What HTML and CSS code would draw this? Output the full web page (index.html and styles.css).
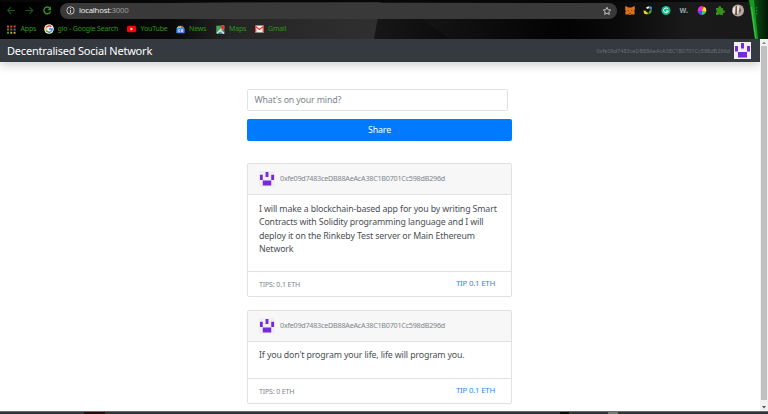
FILE: index.html
```html
<!DOCTYPE html>
<html lang="en">
<head>
<meta charset="utf-8">
<title>Decentralised Social Network</title>
<link rel="stylesheet" href="styles.css">
</head>
<body>
<svg class="defs" width="0" height="0" aria-hidden="true">
  <symbol id="identicon" viewBox="0 0 17 17">
    <rect width="17" height="17" fill="#f0f0f0"/>
    <path fill="#7529d8" d="M7 1h3v5.500H7zM1 4h3v5.500H1zM13 4h3v5.500h-3zM4 10h9v5.500H4z"/>
  </symbol>
</svg>
<header class="chrome">
  <svg class="theme" width="768" height="39" viewBox="0 0 768 39">
    <defs>
      <linearGradient id="dark"><stop offset="0" stop-color="#000"/><stop offset=".45" stop-color="#080808"/><stop offset=".6" stop-color="#242424"/><stop offset="1" stop-color="#303030"/></linearGradient>
      <linearGradient id="right"><stop offset="0" stop-color="#171717"/><stop offset=".2" stop-color="#0c0c0c"/><stop offset=".5" stop-color="#030303"/><stop offset=".62" stop-color="#0a0a0a"/><stop offset=".8" stop-color="#1a1a1a"/><stop offset="1" stop-color="#191919"/></linearGradient>
      <linearGradient id="wedge"><stop offset="0" stop-color="#181818"/><stop offset="1" stop-color="#030303"/></linearGradient>
      <linearGradient id="glow"><stop offset="0" stop-color="#102010"/><stop offset=".3" stop-color="#064b10"/><stop offset="1" stop-color="#041806"/></linearGradient>
    </defs>
    <path fill="url(#right)" d="M370 0h398v39H370z"/>
    <path fill="url(#dark)" d="M0 0h381l-7 39H0z"/>
    <path fill="url(#wedge)" d="M395 0l55 39h110V0z"/>
    <path fill="url(#glow)" d="M749 0h19v39h-11z"/>
    <path fill="#149c22" d="M749 0h5l4 39h-3z"/>
    <path fill="#49c74c" d="M751 7l1 0 4 31h-1z"/>
    <path fill="#070707" d="M0 0h748v2H0z"/>
  </svg>
  <div class="toolbar">
    <svg class="nav-icons" width="60" height="20" viewBox="0 0 60 20" fill="none" stroke="#1d5415" stroke-width="1.100">
      <path d="M15 10.500H8m3-3.300-3.300 3.300 3.300 3.300M25.500 10.500h7m-3-3.300 3.300 3.300-3.300 3.300"/>
      <path stroke="#36901d" stroke-width="1.400" d="M50 8.300a3.400 3.400 0 1 0 .5 3.200"/><path fill="#36901d" stroke="none" d="M51 6.500v3.800h-3.800z"/>
    </svg>
    <div class="omnibox">
      <svg width="9" height="9" viewBox="0 0 9 9" fill="none" stroke="#c4c4c4"><circle cx="4.500" cy="4.500" r="3.700"/><path d="M4.500 4v3M4.500 2.200v1"/></svg>
      <span class="url">localhost<i>:3000</i></span>
      <svg class="star" width="10" height="10" viewBox="0 0 10 10"><path fill="none" stroke="#c7c7c7" d="M5 1.300l1.100 2.400 2.600.3-1.900 1.800.5 2.600L5 7.100 2.700 8.400l.5-2.600L1.300 4l2.600-.3z"/></svg>
    </div>
    <svg class="extensions" width="148" height="18" viewBox="0 0 148 18">
      <path fill="#d9731d" d="M5.300 5l3.500 1.600h2.400L14.700 5l.2 3-.6 2.300.5 2-.6 1.500-2.500-.6-.8.700H9.100l-.8-.7-2.500.6-.6-1.500.5-2L5.100 8z"/><path fill="#6f3b17" d="M7.300 9l1.700.6-.3.900zM12.700 9l-1.700.6.3.9zM9 12.200h2v1H9z"/>
      <path fill="#10140c" d="M25 8l6-3 1.500 3-2 4-5 1z"/><path fill="#f4f1cf" d="M26 6.500l2.500-1.200 1 1.700-2.500 1z"/><path fill="#3e94cf" d="M29 5l3 1-.4 3-2-1z"/><path fill="#3fae39" d="M29.500 9.500l2.500-.5-1 3-3 1.500z"/><path fill="#f3d425" d="M23.500 9.500l2 .3 1.500 1.600 1.500.4-1.500 1.700-3-1z"/>
      <circle cx="46" cy="9.500" r="4.500" fill="#13b98c"/><path fill="none" stroke="#fff" stroke-width="1" d="M48 8a2.400 2.400 0 1 0 .3 2H46"/>
      <text x="59.500" y="12" class="ext-w">w.</text>
      <circle cx="82" cy="9.500" r="4.200" fill="#fa3c39"/><path fill="#e62de8" d="M82 9.500L77.800 10A4.200 4.200 0 0 1 82 5.300z"/><path fill="#3255ff" d="M82 9.500v4.200A4.200 4.200 0 0 1 77.800 10z"/><path fill="#18df69" d="M82 9.500l4 1.300a4.200 4.200 0 0 1-4 2.900z"/><path fill="#ffe32d" d="M82 9.500l2-3.700a4.200 4.200 0 0 1 2 5z"/>
      <path fill="#36901d" d="M96 7h2.500a1.400 1.400 0 1 1 2.500 0h2v2.500a1.300 1.300 0 1 1 0 2.400V14h-2.300a1.300 1.300 0 0 0-2.400 0H96v-2.400a1.300 1.300 0 0 0 0-2.400z"/>
      <circle cx="118" cy="9.500" r="6" fill="#b7aaa4"/><path fill="#6b544e" d="M116 5h1l1 4-1 5h-2zM120 6l1 3-1 4-1-3z"/><path fill="#ead9cd" d="M117 5h2v4l-1 4h-1z"/><path fill="#e6e3e1" d="M113 7l2-1v7l-2-1z"/>
      <path fill="#37881f" d="M136 6h1.200v1.400H136zM136 9h1.200v1.400H136zM136 12h1.200v1.400H136z"/>
    </svg>
  </div>
  <nav class="bookmarks">
    <a class="b-apps"><svg width="9" height="9" viewBox="0 0 9 9"><path fill="#d84a3a" d="M0 .5h2v2H0zm3.300 0h2v2h-2zm3.300 0h2v2h-2z"/><path fill="#8a6d2e" d="M0 3.600h2v2H0zm3.300 0h2v2h-2z"/><path fill="#4578b9" d="M6.600 3.600h2v2h-2z"/><path fill="#359848" d="M0 6.700h2v2H0z"/><path fill="#c99c37" d="M3.300 6.700h2v2h-2zm3.300 0h2v2h-2z"/></svg><span>Apps</span></a>
    <a class="b-glo"><svg width="10" height="10" viewBox="0 0 10 10"><circle cx="5" cy="5" r="4.800" fill="#fff"/><g fill="none" stroke-width="1.500"><path stroke="#ea4335" d="M7.300 2.900A3.100 3.100 0 0 0 2.200 3.600"/><path stroke="#fbbc05" d="M2.200 3.600a3.100 3.100 0 0 0 0 2.800"/><path stroke="#34a853" d="M2.200 6.400A3.100 3.100 0 0 0 7 7.400"/><path stroke="#4285f4" d="M7 7.400A3.100 3.100 0 0 0 8.100 5H5"/></g></svg><span>glo - Google Search</span></a>
    <a class="b-yt"><svg width="9" height="8" viewBox="0 0 9 8"><rect y=".8" width="9" height="6.400" rx="1.500" fill="#f00"/><path fill="#fff" d="M3.500 2.500l2.700 1.500-2.700 1.500z"/></svg><span>YouTube</span></a>
    <a class="b-news"><svg width="9" height="9" viewBox="0 0 9 9"><path fill="#2f9b52" d="M2 .8h5v3H2z"/><path fill="#e45445" d="M5 1l3 1-1 3H4z"/><path fill="#e7bd38" d="M1 2l4-1v3H1z"/><rect x=".4" y="3" width="8.200" height="5.200" rx=".7" fill="#5189e8"/><path fill="none" stroke="#fff" stroke-width=".6" d="M4 4.700H2.700v1.800H4M5 4.700h2M5 5.600h2M5 6.500h2"/></svg><span>News</span></a>
    <a class="b-maps"><svg width="9" height="9" viewBox="0 0 9 9"><rect x=".3" y=".7" width="8" height="8" fill="#45a866"/><path fill="#4d81d0" d="M3.700 8.700L7 5l1.300 1v2.700z"/><path stroke="#e9e9e0" stroke-width="1.400" d="M1 8.300L7.500 2M4 5.300l4 3.300"/><path fill="#e64438" d="M4.700 2a2 2 0 1 1 4 0c0 1.600-2 3.400-2 3.400s-2-1.800-2-3.400z"/><circle cx="6.700" cy="2" r=".6" fill="#811e19"/></svg><span>Maps</span></a>
    <a class="b-gmail"><svg width="9" height="8" viewBox="0 0 9 8"><rect y=".6" width="9" height="7" rx=".6" fill="#f1eeed"/><path fill="none" stroke="#da4336" stroke-width="1.300" d="M.7 7.600V1.500l3.800 3 3.800-3v6.100"/></svg><span>Gmail</span></a>
  </nav>
</header>
<div class="viewport">
  <div class="page">
    <nav class="navbar"><a class="brand">Decentralised Social Network</a><span class="account">0xfe09d7483ceDB88AeAcA38C1B0701Cc598dB296d</span><svg class="avatar" width="17" height="17"><use href="#identicon"/></svg></nav>
    <main class="feed">
      <div class="field">What's on your mind?</div>
      <div class="share"><span>Share</span></div>
      <article class="card">
        <div class="card-header"><svg width="16" height="16"><use href="#identicon"/></svg><span>0xfe09d7483ceDB88AeAcA38C1B0701Cc598dB296d</span></div>
        <div class="card-body"><p>I will make a blockchain-based app for you by writing Smart</p><p>Contracts with Solidity programming language and I will</p><p>deploy it on the Rinkeby Test server or Main Ethereum</p><p>Network</p></div>
        <div class="card-footer"><span class="tips">TIPS: 0.1 ETH</span><a class="tip">TIP 0.1 ETH</a></div>
      </article>
      <article class="card second">
        <div class="card-header"><svg width="16" height="16"><use href="#identicon"/></svg><span>0xfe09d7483ceDB88AeAcA38C1B0701Cc598dB296d</span></div>
        <div class="card-body"><p>If you don't program your life, life will program you.</p></div>
        <div class="card-footer"><span class="tips">TIPS: 0 ETH</span><a class="tip">TIP 0.1 ETH</a></div>
      </article>
    </main>
  </div>
  <div class="scrollbar">
    <svg width="8" height="7" viewBox="0 0 8 7"><path fill="#8b8b8b" d="M2 5l2-2.500L6 5z"/></svg>
    <div class="thumb"></div>
    <svg width="8" height="10" viewBox="0 0 8 10"><path fill="#505050" d="M2 6l2 2.500L6 6z"/></svg>
  </div>
</div>
<footer class="taskbar"><i class="t1"></i><i class="t2"></i><i class="t3"></i></footer>
</body>
</html>
```
FILE: styles.css
```css
* { box-sizing: border-box; }
body { margin: 0; width: 768px; height: 414px; overflow: hidden; background: #fff; font-family: "Noto Sans", "Open Sans", sans-serif; }
svg { display: block; flex: none; }
.defs { position: absolute; }
span, a, p { white-space: nowrap; }
.chrome { position: relative; height: 39px; background: #080808; }
.theme { position: absolute; left: 0; top: 0; }
.toolbar { position: relative; display: flex; height: 20px; }
.omnibox { display: flex; align-items: center; width: 557px; height: 15.500px; margin-top: 3px; padding: 0 5px 0 5.500px; border-radius: 8px; background: #393939; }
.url { margin-left: 4.500px; color: #eee; font-size: 7.800px; letter-spacing: -.25px; line-height: 15px; }
.url i { font-style: normal; color: #9d9d9d; }
.star { margin-left: auto; }
.extensions { margin: 1px 0 0 3px; }
.ext-w { fill: #8ba0ad; font: 700 8px "Noto Sans", sans-serif; }
.bookmarks { position: relative; display: flex; height: 18px; padding-left: 7px; }
.bookmarks a { display: flex; align-items: center; gap: 4.500px; color: #30951a; font-size: 7px; letter-spacing: -.17px; line-height: 17px; }
.bookmarks span { position: relative; top: -.5px; }
.b-apps { width: 37px; }
.bookmarks .b-glo { width: 83px; gap: 3.500px; }
.b-yt { width: 48.500px; }
.b-news { width: 40px; }
.b-maps { width: 39px; }
.viewport { display: flex; height: 372px; }
.page { width: 760px; background: #fff; }
.navbar { display: flex; align-items: center; height: 23px; padding: 0 9px 0 7px; background: #343a40; box-shadow: 0 4px 8px rgba(0,0,0,.16); }
.brand { color: #fff; font-size: 11px; letter-spacing: -.2px; }
.account { margin-left: auto; color: #687078; font-size: 5.500px; }
.avatar { margin-left: 4px; }
.feed { width: 265px; margin: 27px 0 0 247px; }
.field { width: 261px; height: 22px; padding-left: 6.500px; border: 1px solid #dfe3e7; border-radius: 2px; color: #7d858c; font-size: 8.800px; letter-spacing: -.14px; line-height: 21px; }
.share { height: 22px; margin-top: 8px; border-radius: 2px; background: #007bff; color: #fff; font-size: 8.800px; letter-spacing: -.12px; line-height: 22px; text-align: center; }
.card { height: 134px; margin-top: 22px; display: flex; flex-direction: column; border: 1px solid #e1e1e1; border-radius: 2px; }
.second { height: 94px; margin-top: 13px; }
.card-header { display: flex; align-items: center; height: 31px; padding-left: 11px; gap: 5px; background: #f7f7f7; border-bottom: 1px solid #e1e1e1; color: #7d858c; font-size: 7.200px; letter-spacing: -.23px; line-height: 14px; }
.card-header span { padding-bottom: 2px; }
.card-body { flex: 1; padding: 7.500px 11px; color: #4a4f54; font-size: 8.800px; letter-spacing: -.14px; line-height: 13.500px; }
.second .card-body { padding-top: 6.500px; }
.card-body p { margin: 0; }
.card-footer { display: flex; justify-content: space-between; height: 25px; padding: 0 16px 0 11px; border-top: 1px solid #e1e1e1; }
.tips { color: #7d858c; font-size: 7px; letter-spacing: -.13px; line-height: 25px; }
.tip { color: #2389f8; font-size: 7.800px; letter-spacing: -.2px; line-height: 22px; }
.scrollbar { width: 8px; background: #f1f1f1; }
.thumb { width: 6px; height: 354px; margin-left: 1px; background: #c1c1c1; }
.taskbar { display: flex; height: 3px; background: #303234; border-top: 1px solid #6b6b6b; }
.t1 { width: 21px; height: 2px; margin-left: 84px; background: #250b0e; }
.t2 { width: 9px; height: 2px; margin-left: 455px; background: #080808; }
.t3 { width: 10px; height: 2px; margin-left: 39px; background: #777; }
```
